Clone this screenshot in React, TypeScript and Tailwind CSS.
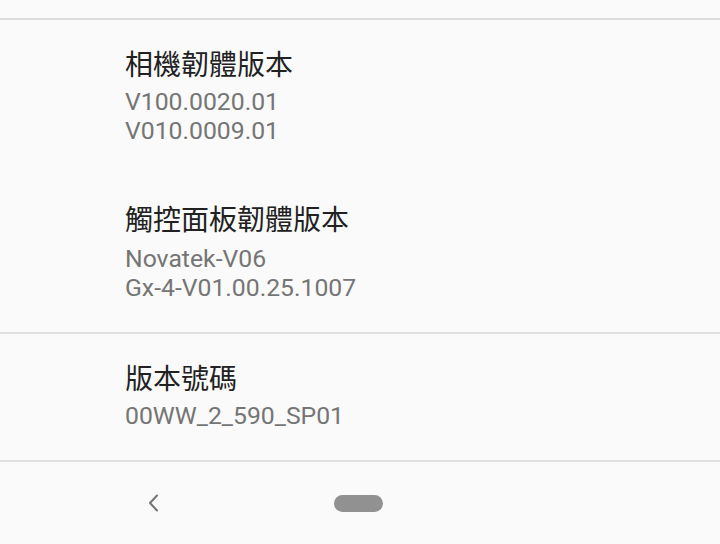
import React from 'react';

interface InfoItem {
  title: string;
  lines: string[];
}

const groupOne: InfoItem[] = [
  { title: '相機韌體版本', lines: ['V100.0020.01', 'V010.0009.01'] },
  { title: '觸控面板韌體版本', lines: ['Novatek-V06', 'Gx-4-V01.00.25.1007'] },
];

const titleFont = { fontFamily: 'Roboto, "Noto Sans CJK TC", sans-serif' };

const Item: React.FC<{ item: InfoItem; className?: string; gap?: string }> = ({ item, className, gap }) => (
  <div className={`pl-[125px] ${className ?? ''}`}>
    <div className="text-[28px] leading-[36px] text-[#212121] font-['Roboto','Noto_Sans_CJK_TC',sans-serif]">
      {item.title}
    </div>
    <div className={`${gap ?? 'mt-[3px]'} text-[24.75px] leading-[29px] text-[#757575] font-['Roboto',sans-serif]`}>
      {item.lines.map((l, i) => (
        <div key={i}>{l}</div>
      ))}
    </div>
  </div>
);

export default function App() {
  return (
    <div className="w-[720px] h-[544px] overflow-hidden bg-[#fafafa] flex flex-col" style={titleFont}>
      <div className="h-[18px]" />
      <div className="h-[2px] bg-[#dcdcdc]" />

      <div className="flex flex-col">
        <Item item={groupOne[0]} className="pt-[28px] pb-[28px]" />
        <Item item={groupOne[1]} className="pt-[30px] pb-[30px]" gap="mt-[5px]" />
      </div>

      <div className="h-[2px] bg-[#e0e0e0]" />

      <Item
        item={{ title: '版本號碼', lines: ['00WW_2_590_SP01'] }}
        className="pt-[28px] pb-[30px]"
      />

      <div className="h-[2px] bg-[#e0e0e0]" />

      <div className="flex-1 flex items-center pl-[148px]">
        <svg width="11" height="18" viewBox="0 0 11 18" fill="none">
          <polyline points="9,1.5 2,9 9,16.5" stroke="#757575" strokeWidth="2" strokeLinejoin="round" strokeLinecap="round" />
        </svg>
        <div className="ml-[175px] w-[49px] h-[17px] rounded-full bg-[#919191]" />
      </div>
    </div>
  );
}
